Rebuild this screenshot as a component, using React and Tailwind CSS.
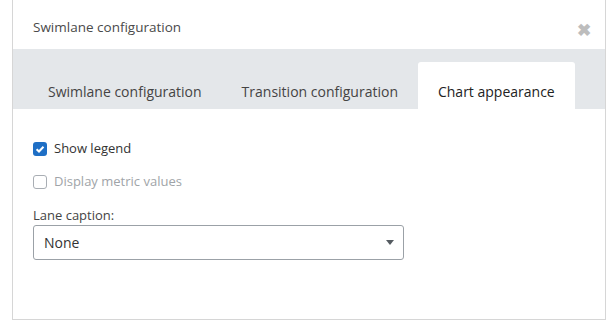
import React, { useState } from "react";

const tabs = ["Swimlane configuration", "Transition configuration", "Chart appearance"];

export default function App() {
  const [active, setActive] = useState(2);
  const [legend, setLegend] = useState(true);

  return (
    <div className="w-[611px] h-[325px] bg-white pl-[12px] font-['Open_Sans',sans-serif]">
      <div className="w-[594px] h-[320px] border-x border-b border-[#d6d6d6] bg-white flex flex-col">
        {/* Header */}
        <div className="h-[49px] flex items-center justify-between pl-[20px] pr-[14px] pt-[5px]">
          <span className="text-[13.5px] text-[#4a4a4a]">Swimlane configuration</span>
          <span className="text-[#bdbdbd] text-[17px] font-bold leading-none mt-[4px]">✖</span>
        </div>

        {/* Tabs */}
        <div className="h-[60px] bg-[#e4e7ea] flex items-end pl-[15px]">
          {tabs.map((t, i) => (
            <button
              key={t}
              onClick={() => setActive(i)}
              className={
                "h-[47px] px-[20px] text-[14px] pt-[12px] rounded-t-[3px] " +
                (i === active ? "bg-white text-[#222]" : "text-[#444]")
              }
            >
              {t}
            </button>
          ))}
        </div>

        {/* Body */}
        <div className="px-[20px] pt-[30px] flex flex-col">
          <label className="flex items-center gap-[7px] h-[18px] mt-[1px] cursor-pointer" onClick={() => setLegend(!legend)}>
            {legend ? (
              <span className="w-[14px] h-[14px] rounded-[3px] bg-[#1f6fc5] flex items-center justify-center">
                <svg width="10" height="10" viewBox="0 0 10 10">
                  <path d="M1.6 5.2 L4 7.5 L8.5 2.7" fill="none" stroke="white" strokeWidth="2" />
                </svg>
              </span>
            ) : (
              <span className="w-[14px] h-[14px] rounded-[3px] border border-[#8a9098]" />
            )}
            <span className="text-[13px] text-[#333]">Show legend</span>
          </label>

          <label className="flex items-center gap-[7px] h-[18px] mt-[15px]">
            <span className="w-[14px] h-[14px] rounded-[3px] border border-[#a9aeb4] bg-white" />
            <span className="text-[13px] text-[#a0a4a8]">Display metric values</span>
          </label>

          <div className="text-[13px] text-[#444] mt-[15px] leading-[18px]">Lane caption:</div>
          <div className="mt-[1px] w-[371px] h-[35px] border border-[#9ba1a7] rounded-[3px] flex items-center justify-between pl-[10px] pr-[9px]">
            <span className="text-[14px] text-[#333]">None</span>
            <svg width="8" height="5" viewBox="0 0 8 5">
              <path d="M0 0 H8 L4 5 Z" fill="#555b61" />
            </svg>
          </div>
        </div>
      </div>
    </div>
  );
}
